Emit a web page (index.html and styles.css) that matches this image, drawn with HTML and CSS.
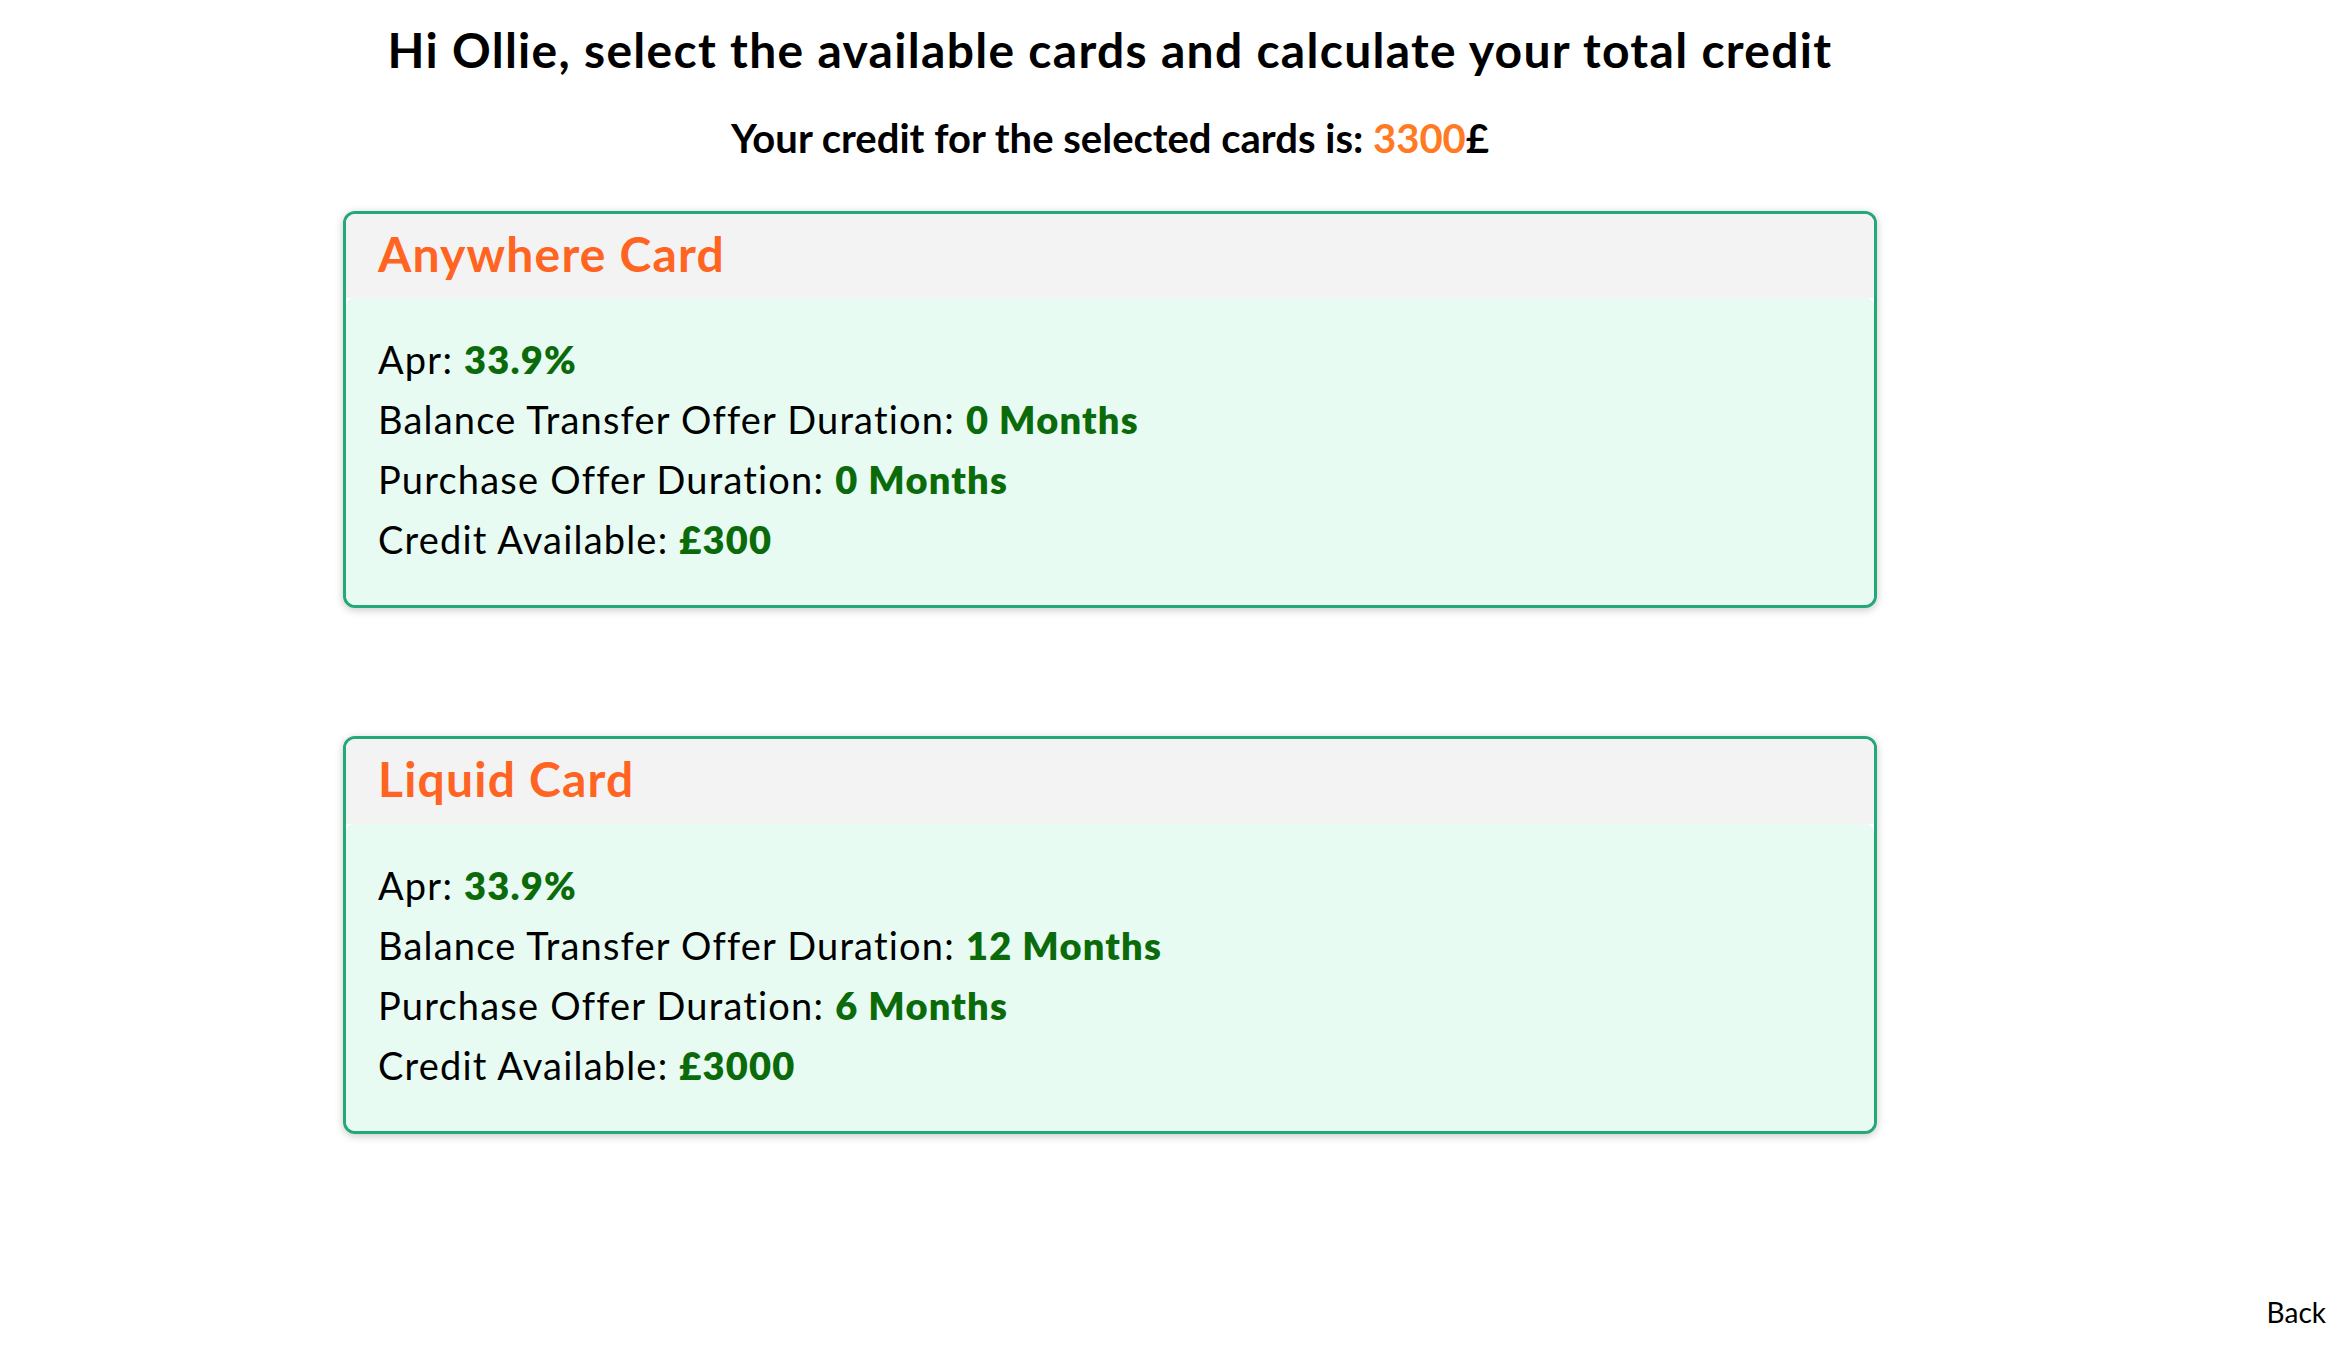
FILE: index.html
```html
<!DOCTYPE html>
<html lang="en">
<head>
<meta charset="utf-8">
<title>Credit cards</title>
<link rel="stylesheet" href="styles.css">
</head>
<body>
<div class="page">
  <main class="main">
    <h1 class="title">Hi Ollie, select the available cards and calculate your total credit</h1>
    <p class="total">Your credit for the selected cards is: <span class="total-value">3300</span>£</p>
    <section class="cards">
      <article class="card">
        <header class="card-head"><h2 class="card-name">Anywhere Card</h2></header>
        <div class="card-body">
          <div class="row">Apr: <b class="val">33.9%</b></div>
          <div class="row">Balance Transfer Offer Duration: <b class="val">0 Months</b></div>
          <div class="row">Purchase Offer Duration: <b class="val">0 Months</b></div>
          <div class="row">Credit Available: <b class="val">£300</b></div>
        </div>
      </article>
      <article class="card">
        <header class="card-head"><h2 class="card-name">Liquid Card</h2></header>
        <div class="card-body">
          <div class="row">Apr: <b class="val">33.9%</b></div>
          <div class="row">Balance Transfer Offer Duration: <b class="val">12 Months</b></div>
          <div class="row">Purchase Offer Duration: <b class="val">6 Months</b></div>
          <div class="row">Credit Available: <b class="val">£3000</b></div>
        </div>
      </article>
    </section>
  </main>
  <footer class="footer"><a class="back">Back</a></footer>
</div>
</body>
</html>
```
FILE: styles.css
```css
* { box-sizing: border-box; }
html, body { margin: 0; padding: 0; background: #fff; }
body {
  font-family: Lato, "Noto Sans", sans-serif;
  color: #000;
}
.page {
  min-height: 1350px;
  display: flex;
  flex-direction: column;
}
.main {
  width: 2220px;
  display: flex;
  flex-direction: column;
  align-items: center;
}
.title {
  margin: 21px 0 0;
  font-size: 48px;
  line-height: 1.2;
  font-weight: 700;
  letter-spacing: 1.3px;
}
.total {
  margin: 35px 0 0;
  font-size: 40px;
  line-height: 1.2;
  font-weight: 700;
}
.total-value { color: #ff7a22; }
.cards {
  margin-top: 49px;
  display: flex;
  flex-direction: column;
  gap: 128px;
}
.card {
  width: 1534px;
  border: 3px solid #25a878;
  border-radius: 12px;
  background: #fff;
  box-shadow: 0 2px 8px rgba(0, 0, 0, 0.22);
  overflow: hidden;
}
.card-head {
  background: #f3f3f3;
  padding: 11px 32px 16px;
}
.card-name {
  margin: 0;
  font-size: 48px;
  line-height: 1.2;
  font-weight: 700;
  color: #ff6422;
  letter-spacing: 1.2px;
}
.card-body {
  background: #e8fbf2;
  border-radius: 8px;
  padding: 31px 32px 36px;
  font-size: 38px;
  line-height: 60px;
  letter-spacing: 1.2px;
}
.val { color: #0b6b0b; font-weight: 800; }
.footer {
  margin-top: auto;
  display: flex;
  justify-content: flex-end;
  padding: 0 6px 20px 0;
}
.back {
  font-size: 28px;
  line-height: 1.2;
  color: #000;
  cursor: pointer;
}
```
